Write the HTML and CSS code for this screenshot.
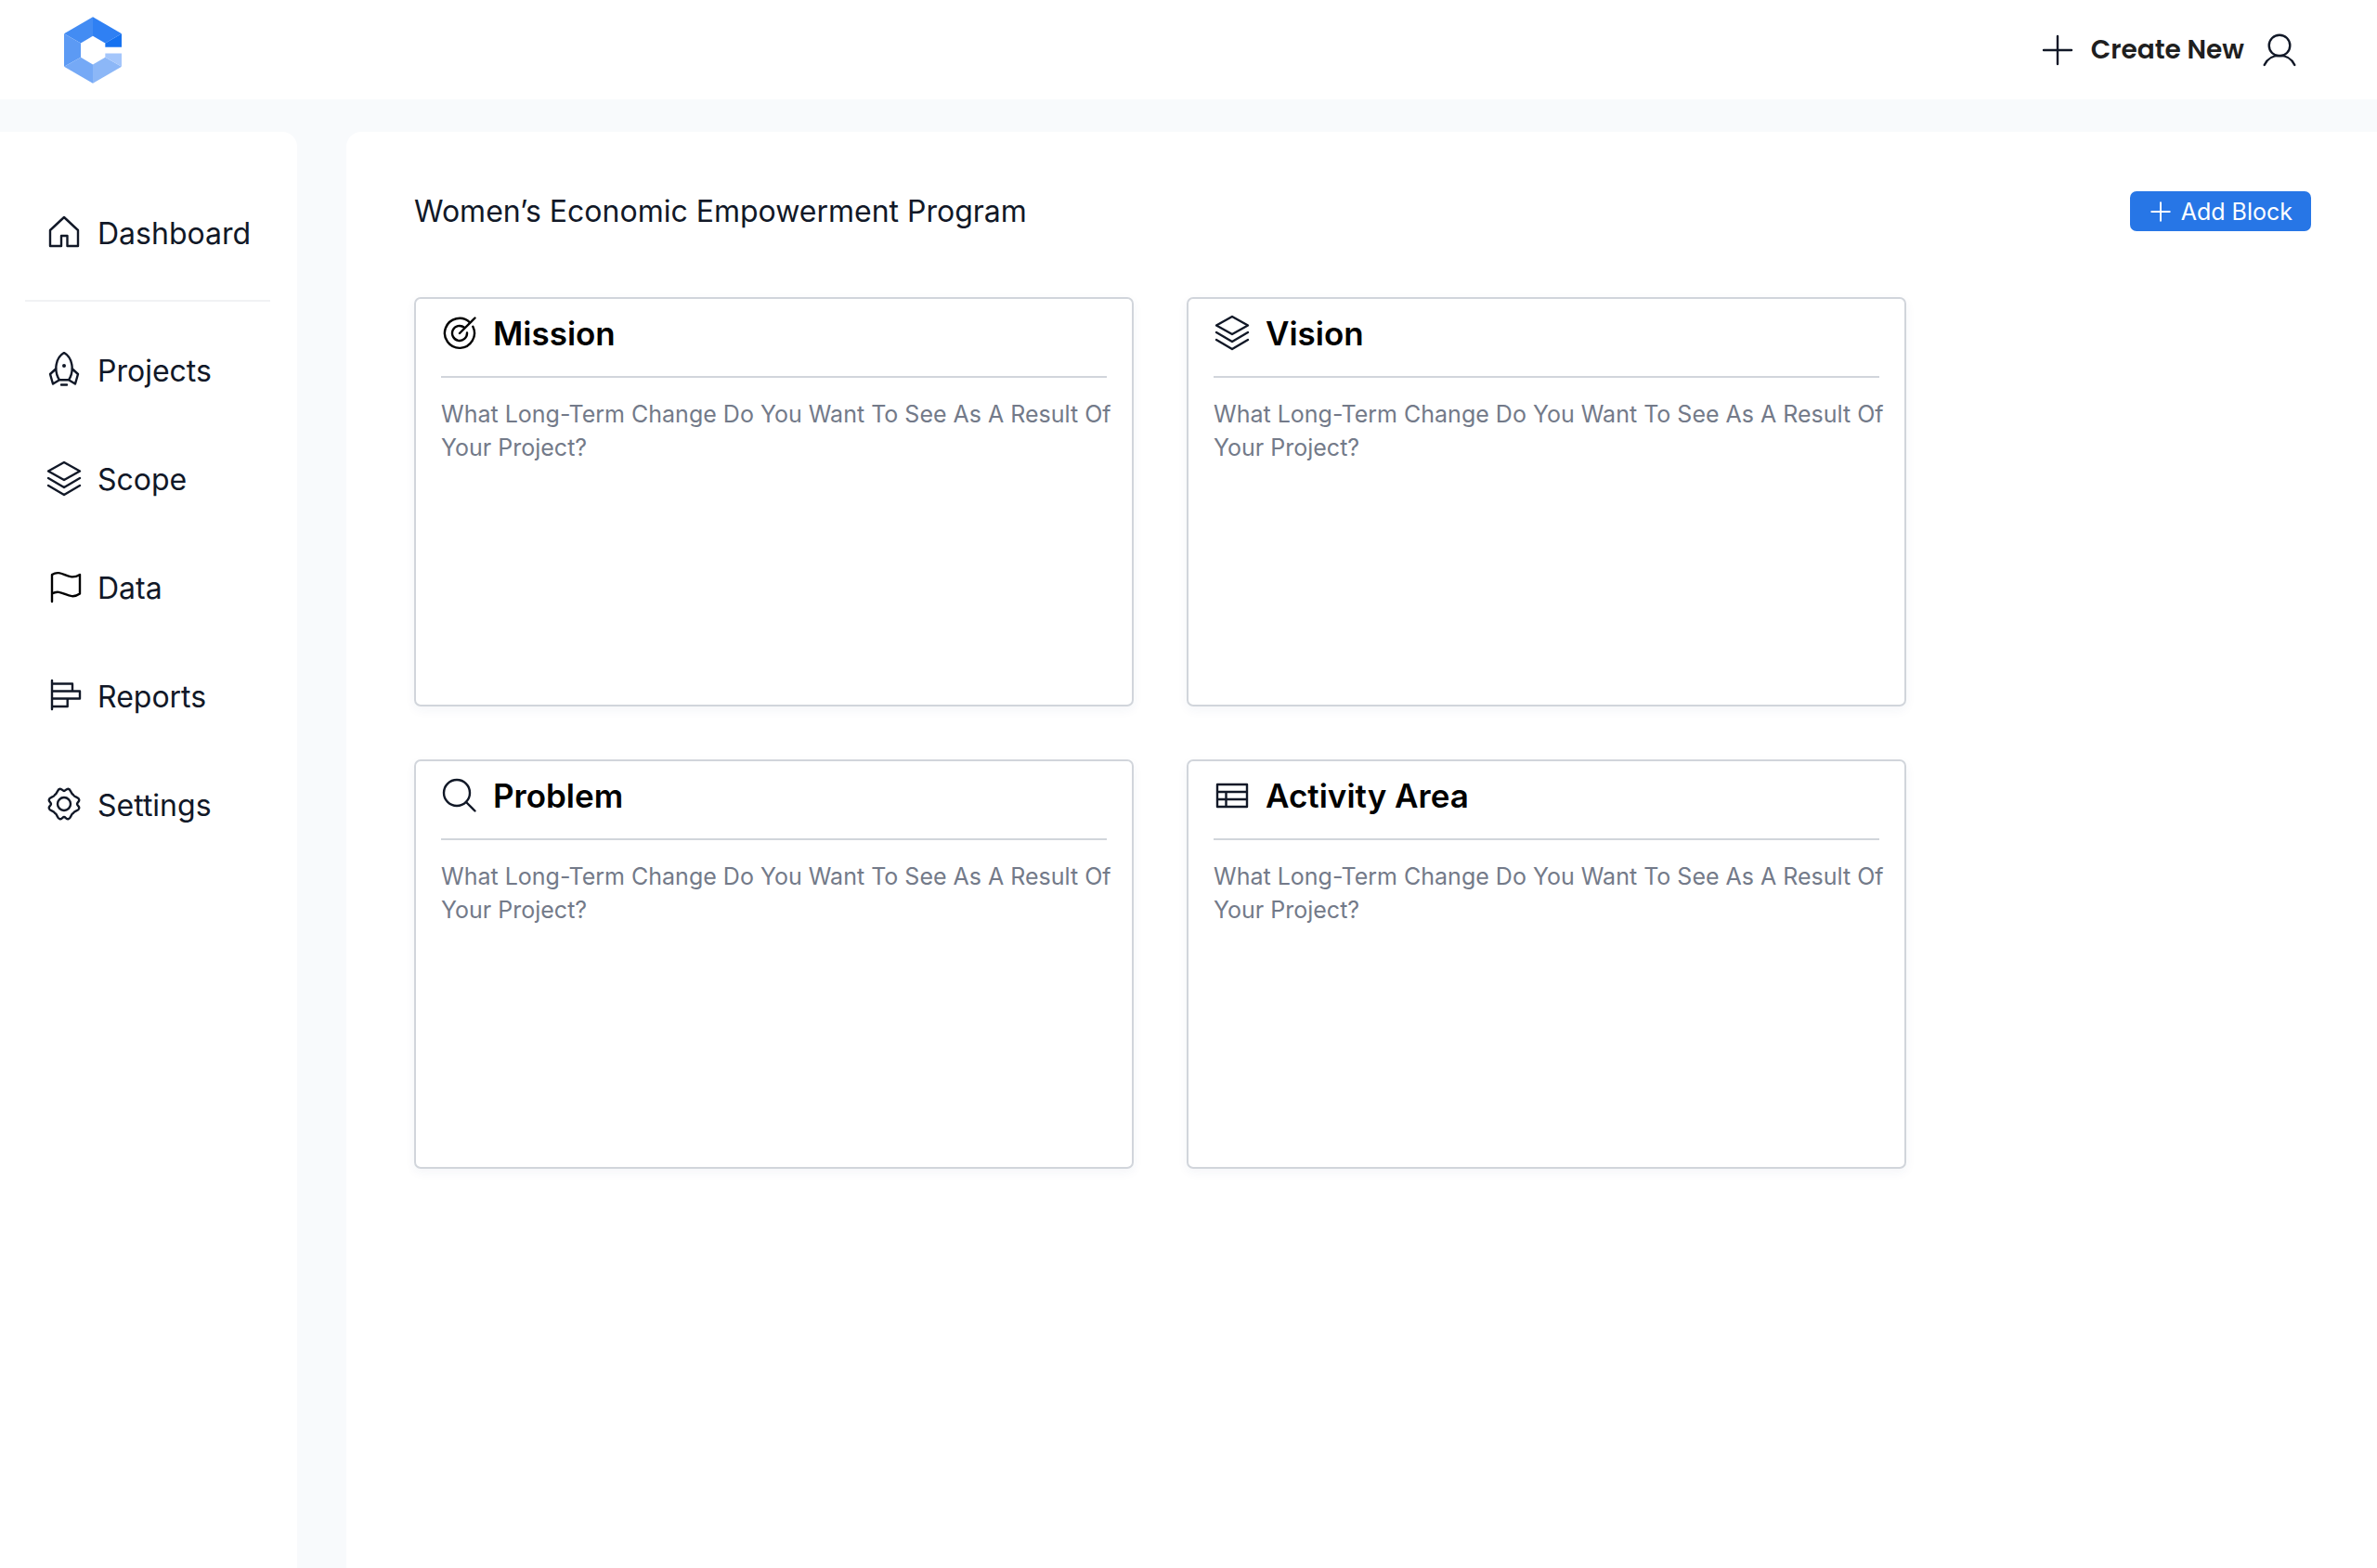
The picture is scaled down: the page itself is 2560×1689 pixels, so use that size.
FILE: index.html
```html
<!DOCTYPE html>
<html lang="en">
<head>
  <meta charset="UTF-8">
  <meta name="viewport" content="width=device-width, initial-scale=1">
  <title>Women’s Economic Empowerment Program</title>
  <link rel="stylesheet" href="styles.css">
</head>
<body>
  <!-- shared icon shapes -->
  <svg class="sprite" aria-hidden="true">
    <symbol id="icon-layers" viewBox="0 0 40 40">
      <path d="M20 2 37 11.5 20 21 3 11.5ZM3 19 20 29 37 19M3 27 20 37 37 27"/>
    </symbol>
    <symbol id="icon-plus" viewBox="0 0 40 40">
      <path d="M20 5V35M5 20H35"/>
    </symbol>
  </svg>

  <header class="topbar">
    <a href="#" class="logo" aria-label="Home">
      <svg viewBox="0 0 186 215">
        <polygon fill="#438cf3" points="93,0 93,62 54,85 0,54"/>
        <polygon fill="#5c9af4" points="0,54 54,85 54,131 0,161"/>
        <polygon fill="#75a9f6" points="0,161 54,131 93,154 93,215"/>
        <polygon fill="#8cb7f7" points="93,215 93,154 133,131 186,161"/>
        <polygon fill="#a4c6fb" points="186,161 133,131 133,118 186,118"/>
        <polygon fill="#2f80f3" points="93,0 186,54 133,85 93,62"/>
        <polygon fill="#1672f0" points="186,54 186,98 133,98 133,85"/>
      </svg>
    </a>
    <div class="actions">
      <button type="button" class="create">
        <svg class="icon"><use href="#icon-plus"/></svg>
        Create New
      </button>
      <button type="button" class="user" aria-label="Account">
        <svg class="icon" viewBox="0 0 40 40"><circle cx="20" cy="15" r="11.3"/><path d="M3.7 36C10 22.5 30 22.5 36.3 36"/></svg>
      </button>
    </div>
  </header>

  <div class="layout">
    <nav class="sidebar">
      <a href="#" class="nav-link">
        <svg class="icon" viewBox="0 0 40 40"><path d="M5 17 20 3 35 17V34H23.5V23H17V34H5Z"/></svg>
        Dashboard
      </a>
      <hr>
      <a href="#" class="nav-link">
        <svg class="icon" viewBox="0 0 40 40">
          <path d="M15 30.3C8.5 20 11 6 20 1 29 6 31.5 20 25 30.3ZM11.5 18 5 24 8 34.5 15 30.3M28.5 18 35 24 32 34.5 25 30.3M17 35.5H23"/>
          <circle class="dot" cx="20" cy="15" r="2"/>
        </svg>
        Projects
      </a>
      <a href="#" class="nav-link">
        <svg class="icon"><use href="#icon-layers"/></svg>
        Scope
      </a>
      <a href="#" class="nav-link">
        <svg class="icon black" viewBox="0 0 40 40"><path d="M7 35V6C18-1 24 14 37 6V26.5C25 35 18 20 7 26.5"/></svg>
        Data
      </a>
      <a href="#" class="nav-link">
        <svg class="icon" viewBox="0 0 40 40"><path d="M7 3V34M7 6.5H29V14.5M7 14.5H37V22.5H7M7 31H23.7V22.5"/></svg>
        Reports
      </a>
      <a href="#" class="nav-link">
        <svg class="icon" viewBox="0 0 40 40">
          <g transform="translate(20 19)">
            <path d="M0-14C1.5-14 2.5-16.5 4.5-16.3 7.5-16 7-11 9.9-9.9 11-7 16-7.5 16.3-4.5 16.5-2.5 14-1.5 14 0 14 1.5 16.5 2.5 16.3 4.5 16 7.5 11 7 9.9 9.9 7 11 7.5 16 4.5 16.3 2.5 16.5 1.5 14 0 14-1.5 14-2.5 16.5-4.5 16.3-7.5 16-7 11-9.9 9.9-11 7-16 7.5-16.3 4.5-16.5 2.5-14 1.5-14 0-14-1.5-16.5-2.5-16.3-4.5-16-7.5-11-7-9.9-9.9-7-11-7.5-16-4.5-16.3-2.5-16.5-1.5-14 0-14Z"/>
            <circle r="7"/>
          </g>
        </svg>
        Settings
      </a>
    </nav>

    <main class="content">
      <div class="content-head">
        <h1>Women’s Economic Empowerment Program</h1>
        <button type="button" class="add-block">
          <svg class="icon"><use href="#icon-plus"/></svg>
          Add Block
        </button>
      </div>

      <div class="blocks">
        <section class="block">
          <h2>
            <svg class="icon black" viewBox="0 0 40 40"><path d="M20 20 36.5 3.5M31 8.3A16 16 0 1 0 34.3 12.8M25 13.7A8 8 0 1 0 28 19.5"/></svg>
            Mission
          </h2>
          <p>What Long-Term Change Do You Want To See As A Result Of Your Project?</p>
        </section>
        <section class="block">
          <h2>
            <svg class="icon"><use href="#icon-layers"/></svg>
            Vision
          </h2>
          <p>What Long-Term Change Do You Want To See As A Result Of Your Project?</p>
        </section>
        <section class="block">
          <h2>
            <svg class="icon" viewBox="0 0 40 40"><circle cx="17" cy="17" r="14"/><path d="M27 27 36.5 36.5"/></svg>
            Problem
          </h2>
          <p>What Long-Term Change Do You Want To See As A Result Of Your Project?</p>
        </section>
        <section class="block">
          <h2>
            <svg class="icon" viewBox="0 0 40 40"><path d="M4 8H36V32H4ZM4 16H36M4 24H36M13.5 16V32"/></svg>
            Activity Area
          </h2>
          <p>What Long-Term Change Do You Want To See As A Result Of Your Project?</p>
        </section>
      </div>
    </main>
  </div>
</body>
</html>
```

FILE: styles.css
```css
* { box-sizing: border-box; }
body { margin: 0; min-height: 100vh; display: flex; flex-direction: column; background: #f8fafc; color: #111827; font-family: Inter, "Liberation Sans", sans-serif; font-size: 32px; }
button { font-family: inherit; border: none; background: none; padding: 0; color: inherit; cursor: pointer; }
h1, h2, p { margin: 0; }

.sprite { display: none; }
.icon { width: 40px; height: 40px; flex: none; fill: none; stroke: #111827; stroke-width: 2.4; stroke-linecap: round; stroke-linejoin: round; }
.icon.black { stroke: #000; }
.dot { fill: #111827; stroke: none; }

.topbar { display: flex; align-items: center; justify-content: space-between; height: 107px; padding: 0 85px 0 69px; background: #fff; }
.logo svg { display: block; width: 62px; height: 72px; }
.actions { display: flex; align-items: center; gap: 18px; }
.create { display: flex; align-items: center; gap: 16px; font-family: Poppins, Inter, sans-serif; font-size: 28px; font-weight: 600; color: #1f1f1f; }
.user { display: flex; }

.layout { flex: 1; display: flex; gap: 53px; margin-top: 35px; }

.sidebar { width: 320px; flex: none; padding: 79px 29px 79px 27px; background: #fff; border-radius: 0 16px 0 0; }
.sidebar hr { height: 2px; margin: 42px 0 44px; border: none; background: #f1f2f4; }
.nav-link { display: flex; align-items: center; gap: 16px; height: 60px; margin-bottom: 57px; padding-left: 22px; color: inherit; text-decoration: none; }
.nav-link:first-child { margin-bottom: 0; }

.content { flex: 1; padding: 64px 71px 64px 73px; background: #fff; border-radius: 16px 0 0 0; }
.content-head { display: flex; align-items: center; justify-content: space-between; margin-bottom: 71px; }
.content-head h1 { font-size: 32px; line-height: 43px; font-weight: 400; }
.add-block { display: flex; align-items: center; gap: 9px; height: 43px; padding: 0 20px; border-radius: 7px; background: #2776e6; color: #fff; font-size: 25px; }
.add-block .icon { width: 26px; height: 26px; stroke: #fff; stroke-width: 3; }

.blocks { display: grid; grid-template-columns: 1fr 1fr; gap: 57px; max-width: 1607px; }
.block { min-height: 441px; padding: 15px 27px; border: 2px solid #d1d5db; border-radius: 7px; box-shadow: 0 4px 12px rgba(30, 60, 120, 0.05); }
.block h2 { display: flex; align-items: center; gap: 16px; margin-bottom: 21px; padding-bottom: 24px; border-bottom: 2px solid #d1d5db; color: #000; font-size: 35px; line-height: 44px; font-weight: 600; }
.block p { margin-right: -12px; color: #737a89; font-size: 25px; line-height: 36px; }

@media (max-width: 1500px) {
  .blocks { grid-template-columns: 1fr; }
}
```
